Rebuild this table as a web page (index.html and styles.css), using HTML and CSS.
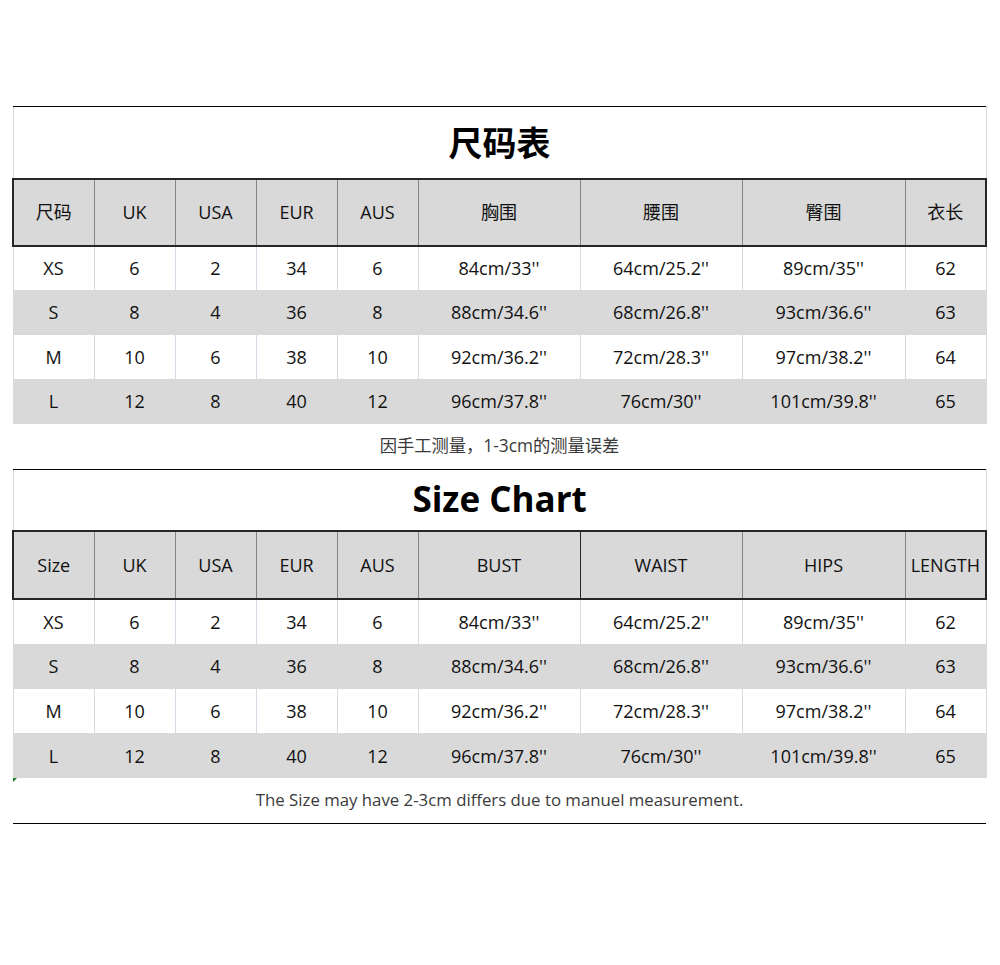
FILE: index.html
```html
<!DOCTYPE html>
<html lang="zh-CN">
<head>
<meta charset="utf-8">
<title>尺码表 / Size Chart</title>
<link rel="stylesheet" href="styles.css">
</head>
<body>
<main class="sheet">
  <table class="chart chart-cn">
    <colgroup>
      <col class="c-size"><col class="c-s"><col class="c-s"><col class="c-s"><col class="c-s">
      <col class="c-w"><col class="c-w"><col class="c-w2"><col class="c-last">
    </colgroup>
    <tbody>
      <tr class="title-row"><td colspan="9" class="title">尺码表</td></tr>
      <tr class="head-row">
        <th>尺码</th><th>UK</th><th>USA</th><th>EUR</th><th>AUS</th><th>胸围</th><th>腰围</th><th>臀围</th><th>衣长</th>
      </tr>
      <tr class="row"><td>XS</td><td>6</td><td>2</td><td>34</td><td>6</td><td>84cm/33''</td><td>64cm/25.2''</td><td>89cm/35''</td><td>62</td></tr>
      <tr class="row alt"><td>S</td><td>8</td><td>4</td><td>36</td><td>8</td><td>88cm/34.6''</td><td>68cm/26.8''</td><td>93cm/36.6''</td><td>63</td></tr>
      <tr class="row"><td>M</td><td>10</td><td>6</td><td>38</td><td>10</td><td>92cm/36.2''</td><td>72cm/28.3''</td><td>97cm/38.2''</td><td>64</td></tr>
      <tr class="row alt"><td>L</td><td>12</td><td>8</td><td>40</td><td>12</td><td>96cm/37.8''</td><td>76cm/30''</td><td>101cm/39.8''</td><td>65</td></tr>
      <tr class="note-row"><td colspan="9" class="note note-cn">因手工测量，1-3cm的测量误差</td></tr>
    </tbody>
  </table>

  <table class="chart chart-en">
    <colgroup>
      <col class="c-size"><col class="c-s"><col class="c-s"><col class="c-s"><col class="c-s">
      <col class="c-w"><col class="c-w"><col class="c-w2"><col class="c-last">
    </colgroup>
    <tbody>
      <tr class="title-row"><td colspan="9" class="title title-en">Size Chart</td></tr>
      <tr class="head-row">
        <th>Size</th><th>UK</th><th>USA</th><th>EUR</th><th>AUS</th><th class="dark">BUST</th><th>WAIST</th><th>HIPS</th><th>LENGTH</th>
      </tr>
      <tr class="row"><td>XS</td><td>6</td><td>2</td><td>34</td><td>6</td><td>84cm/33''</td><td>64cm/25.2''</td><td>89cm/35''</td><td>62</td></tr>
      <tr class="row alt"><td>S</td><td>8</td><td>4</td><td>36</td><td>8</td><td>88cm/34.6''</td><td>68cm/26.8''</td><td>93cm/36.6''</td><td>63</td></tr>
      <tr class="row"><td>M</td><td>10</td><td>6</td><td>38</td><td>10</td><td>92cm/36.2''</td><td>72cm/28.3''</td><td>97cm/38.2''</td><td>64</td></tr>
      <tr class="row alt"><td>L</td><td>12</td><td>8</td><td>40</td><td>12</td><td>96cm/37.8''</td><td>76cm/30''</td><td>101cm/39.8''</td><td>65</td></tr>
      <tr class="note-row"><td colspan="9" class="note note-en"><span class="marker"></span>The Size may have 2-3cm differs due to manuel measurement.</td></tr>
    </tbody>
  </table>
</main>
</body>
</html>
```
FILE: styles.css
```css
html, body {
  margin: 0;
  padding: 0;
  background: #ffffff;
}

body {
  font-family: "Open Sans", "Noto Sans CJK SC", sans-serif;
  color: #111111;
}

.sheet {
  padding: 106px 0 0 12px;
}

.chart {
  width: 973px;
  table-layout: fixed;
  border-collapse: collapse;
  border-spacing: 0;
}

.c-size { width: 81px; }
.c-s { width: 81px; }
.c-w { width: 162px; }
.c-w2 { width: 163px; }
.c-last { width: 81px; }

.chart td,
.chart th {
  padding: 0;
  text-align: center;
  vertical-align: middle;
  font-size: 18px;
  font-weight: 400;
  line-height: 1;
}

.title {
  border-top: 1px solid #000000;
  border-left: 1px solid #d5dbe5;
  border-right: 1px solid #d5dbe5;
  font-family: "Noto Sans CJK SC", sans-serif;
  font-size: 34px !important;
  font-weight: 700 !important;
  color: #000000;
}

.chart-cn .title-row { height: 72px; }
.chart-en .title-row { height: 62px; }

.title-en {
  font-family: "Open Sans", sans-serif;
  font-size: 35px !important;
  padding-bottom: 2px !important;
}

.head-row th {
  background: #d9d9d9;
  border-top: 2px solid #262626;
  border-bottom: 2px solid #262626;
  border-left: 1px solid #858585;
  border-right: 1px solid #858585;
  color: #111111;
}

.head-row th:first-child { border-left: 2px solid #262626; }
.head-row th:last-child { border-right: 2px solid #262626; }
.head-row th.dark { border-left-color: #262626; border-right-color: #262626; }

.chart-cn .head-row { height: 67px; }
.chart-en .head-row { height: 68px; }

.row td {
  border-left: 1px solid #d5dbe5;
  border-right: 1px solid #d5dbe5;
}

.chart-cn .row { height: 44.5px; }
.chart-en .row { height: 44.75px; }

.row.alt td {
  background: #d9d9d9;
  border-left-color: #d9d9d9;
  border-right-color: #d9d9d9;
}

.note {
  color: #3a3a3a;
  position: relative;
}

.note-cn {
  font-size: 17.3px !important;
  height: 45px;
}

.note-en {
  font-size: 16.8px !important;
  height: 45px;
  border-bottom: 1px solid #000000;
}

.marker {
  position: absolute;
  left: 0;
  top: 0;
  width: 0;
  height: 0;
  border-top: 4px solid #1e7b1e;
  border-right: 4px solid transparent;
}
```
